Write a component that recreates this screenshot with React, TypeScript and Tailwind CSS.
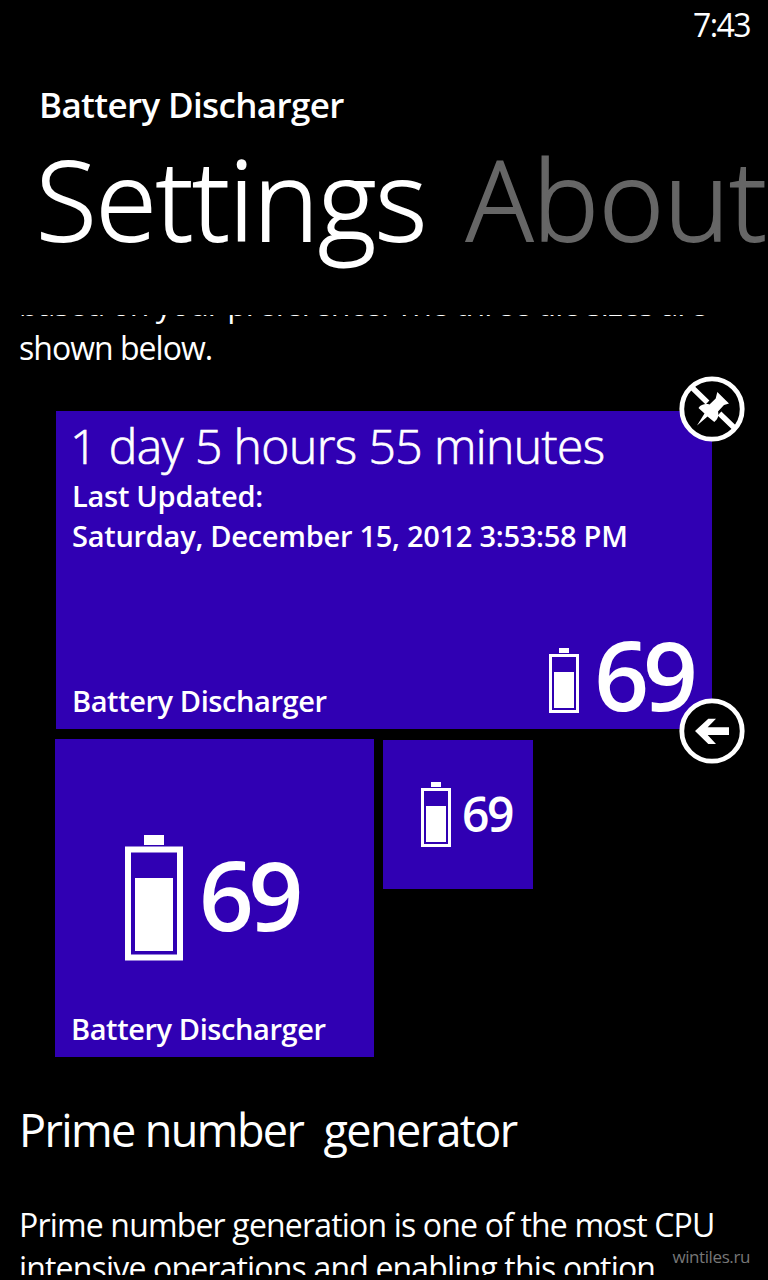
import { ReactNode } from "react";

const BATTERY_LEVEL = 69;

export default function App() {
  return (
    <main className="relative flex h-[1280px] w-[768px] flex-col overflow-hidden bg-black font-['Open_Sans','Noto_Sans',sans-serif] text-white">
      {/* Status bar */}
      <div className="flex h-[45px] justify-end pr-[18px]">
        <span className="text-[32px] leading-[49px] tracking-[-1.6px]">7:43</span>
      </div>

      {/* Pivot header */}
      <header className="flex flex-col whitespace-nowrap">
        <p className="mt-[35px] pl-[39px] text-[35px] leading-[50px] font-semibold tracking-[-0.65px]">
          Battery Discharger
        </p>
        <div className="mt-[3px] flex gap-[40px] pl-[36px] text-[111px] leading-[130px] font-light [-webkit-text-stroke:1.8px]">
          <h1 className="tracking-[-0.7px]">Settings</h1>
          <span className="text-[#666666]">About</span>
        </div>
      </header>

      <section className="mt-[52px] h-[960px] overflow-hidden whitespace-nowrap">
        <p className="mt-[-33px] pl-[19px] text-[32px] leading-[44px] tracking-[-0.98px]">
          based on your preference. The three tile sizes are
          <br />
          shown below.
        </p>

        {/* Tiles */}
        <div className="mt-[41px] pl-[55px]">
          <div className="relative ml-px flex h-[318px] w-[656px] flex-col bg-[#3000b3] pl-4">
            <h2 className="mt-[5px] ml-[-2px] text-[48px] leading-[60px] font-light tracking-[-0.58px] [-webkit-text-stroke:0.7px]">
              1 day 5 hours 55 minutes
            </h2>
            <p className="text-[29px] leading-[40px] font-semibold tracking-[-0.27px]">
              Last Updated:
              <br />
              Saturday, December 15, 2012 3:53:58 PM
            </p>
            <div className="mt-auto flex items-end justify-between pr-[20px]">
              <TileName />
              <div className="flex items-end gap-[15px] pb-[16px]">
                <SmallBattery />
                <span className="mb-[4px] h-[71px] text-[96px] leading-[71px] font-semibold tracking-[-6px]">
                  {BATTERY_LEVEL}
                </span>
              </div>
            </div>
            <Badge className="top-[-35px]">
              <path d="M12 10.5 28.5 26.5M40.5 37.5 55 51.5" stroke="white" strokeWidth="5.4" />
              <path
                d="M38.3 16 50 27.5 45 29 39 35.5C40 39.5 39 43 35.3 46L28.5 40.5 18 49.5 25.5 37.5 19.5 32C22 28 27 27.5 30.5 28.5L36.7 22.5Z"
                fill="white"
              />
            </Badge>
            <Badge className="bottom-[-35px]">
              <path d="M16 33 29.3 20.7H37L28.7 29.3H50V37H28.7L37 46H29.3Z" fill="white" />
            </Badge>
          </div>

          <div className="mt-[10px] flex items-start gap-[9px]">
            <div className="flex h-[318px] w-[319px] flex-col bg-[#3000b3] pl-4">
              <div className="mt-[96px] flex gap-[16px] pl-[54px]">
                <LargeBattery />
                <span className="mt-[23px] h-[71px] text-[96px] leading-[71px] font-semibold tracking-[-5.5px]">
                  {BATTERY_LEVEL}
                </span>
              </div>
              <div className="mt-auto">
                <TileName />
              </div>
            </div>
            <div className="mt-px flex h-[149px] w-[150px] gap-[11px] bg-[#3000b3] pt-[42px] pl-[38px]">
              <SmallBattery />
              <span className="mt-[14px] h-[36px] text-[48px] leading-[36px] font-semibold tracking-[-2.5px]">
                {BATTERY_LEVEL}
              </span>
            </div>
          </div>
        </div>

        <h2 className="mt-[43px] pl-[19px] text-[45px] leading-[60px] tracking-[-1.6px] whitespace-pre">
          {"Prime number  generator"}
        </h2>
        <p className="mt-[43px] pl-[19px] text-[32px] leading-[43px] tracking-[-0.83px]">
          Prime number generation is one of the most CPU
          <br />
          intensive operations and enabling this option
        </p>
      </section>

      <span className="absolute right-[18px] bottom-[11px] text-[17px] leading-[24px] tracking-[-0.4px] text-[#777777]">
        wintiles.ru
      </span>
    </main>
  );
}

function TileName() {
  return (
    <p className="pb-[8px] text-[29px] leading-[40px] font-semibold tracking-[-0.42px]">
      Battery Discharger
    </p>
  );
}

function SmallBattery() {
  return (
    <svg width="30" height="65" viewBox="0 0 30 65" fill="white" className="shrink-0">
      <rect x="10" y="0" width="10" height="5" />
      <rect x="1.5" y="7.5" width="27" height="56" fill="none" stroke="white" strokeWidth="3" />
      <rect x="5" y="24" width="20" height="36" />
    </svg>
  );
}

function LargeBattery() {
  return (
    <svg width="58" height="126" viewBox="0 0 58 126" fill="white" className="shrink-0">
      <rect x="19" y="0" width="20" height="10" />
      <rect x="3" y="14.5" width="52" height="108" fill="none" stroke="white" strokeWidth="6" />
      <rect x="10" y="43" width="38" height="73" />
    </svg>
  );
}

function Badge({ className, children }: { className: string; children: ReactNode }) {
  return (
    <svg
      width="66"
      height="66"
      viewBox="0 0 66 66"
      className={`absolute right-[-33px] ${className}`}
    >
      <circle cx="33" cy="33" r="30.2" fill="black" stroke="white" strokeWidth="4.8" />
      {children}
    </svg>
  );
}
